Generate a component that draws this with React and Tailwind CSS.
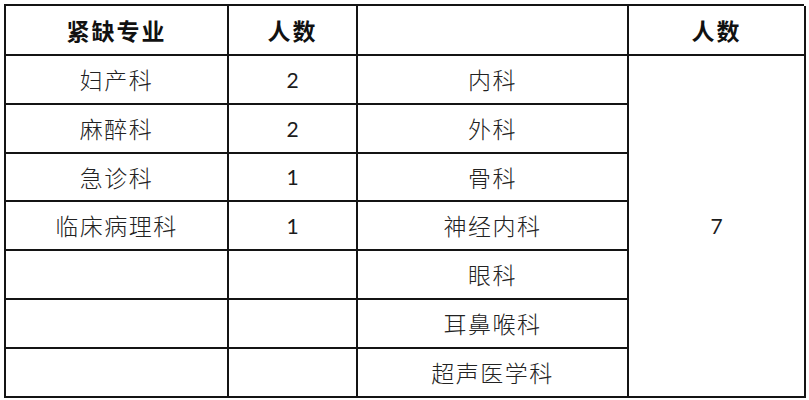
import React from "react";

const cjk = { fontFamily: '"Noto Sans CJK SC", "Noto Sans", sans-serif' };
const num = { fontFamily: 'Lato, "Open Sans", sans-serif' };

function Cell({ children, className = "", bold = false, number = false }) {
  return (
    <div
      className={`flex items-center justify-center border-r-2 border-b-2 border-[#141414] ${className}`}
    >
      {number ? (
        <span className="text-[21px] text-[#1c1c1c]" style={num}>
          {children}
        </span>
      ) : (
        <span
          className={`${bold ? "text-[23px] font-bold text-[#111] tracking-[2px]" : "text-[23px] font-light text-[#222] tracking-[1.5px]"}`}
          style={cjk}
        >
          {children}
        </span>
      )}
    </div>
  );
}

export default function App() {
  const left = [
    ["妇产科", "2"],
    ["麻醉科", "2"],
    ["急诊科", "1"],
    ["临床病理科", "1"],
    ["", ""],
    ["", ""],
    ["", ""],
  ];
  const mid = ["内科", "外科", "骨科", "神经内科", "眼科", "耳鼻喉科", "超声医学科"];
  return (
    <div className="w-[809px] h-[400px] bg-white pt-[4px] pl-[4px]">
      <div className="grid w-[800px] grid-cols-[223px_129px_271px_177px] grid-rows-[50px_49px_49px_48px_49px_49px_49px_49px] border-l-2 border-t-2 border-[#141414]">
        <Cell bold className="col-start-1 row-start-1">紧缺专业</Cell>
        <Cell bold className="col-start-2 row-start-1">人数</Cell>
        <Cell className="col-start-3 row-start-1"></Cell>
        <Cell bold className="col-start-4 row-start-1">人数</Cell>
        {left.map(([a, b], i) => (
          <React.Fragment key={i}>
            <Cell className="col-start-1" >{a}</Cell>
            <Cell number className="col-start-2">{b}</Cell>
            <Cell className="col-start-3">{mid[i]}</Cell>
          </React.Fragment>
        ))}
        <Cell number className="col-start-4 row-start-2 row-span-7">7</Cell>
      </div>
    </div>
  );
}
